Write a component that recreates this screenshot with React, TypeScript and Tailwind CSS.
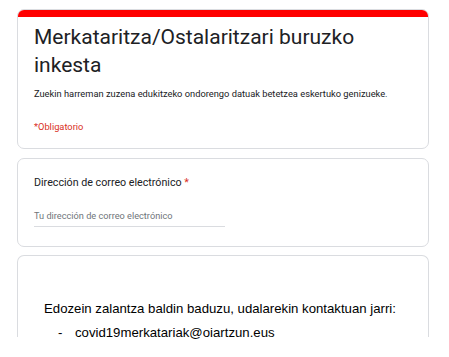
export default function App() {
  return (
    <div className="h-[357px] w-[449px] overflow-hidden bg-white font-['Roboto',sans-serif]">
      <div className="flex flex-col gap-[9px] pl-[17px] pr-[20px] pt-[9px]">
        {/* Header card */}
        <div className="overflow-hidden rounded-[7px] border border-[#dadce0] bg-white">
          <div className="h-[7px] bg-[#ff0000]" />
          <div className="px-[16px] pb-[14px] pt-[6px]">
            <h1 className="text-[21px] leading-[28px] text-[#202124]">
              Merkataritza/Ostalaritzari buruzko inkesta
            </h1>
            <p className="mt-[8px] text-[9.3px] leading-[14px] text-[#202124]">
              Zuekin harreman zuzena edukitzeko ondorengo datuak betetzea eskertuko genizueke.
            </p>
            <p className="mt-[19px] text-[9.3px] leading-[14px] text-[#d93025]">*Obligatorio</p>
          </div>
        </div>

        {/* Email card */}
        <div className="rounded-[7px] border border-[#dadce0] bg-white px-[16px] pb-[19px] pt-[16px]">
          <div className="text-[10.7px] leading-[16px] text-[#202124]">
            Dirección de correo electrónico <span className="text-[#d93025]">*</span>
          </div>
          <div className="mt-[18px] w-[191px] border-b border-[#dadce0] pb-[3px] text-[9.2px] leading-[14px] text-[#70757a]">
            Tu dirección de correo electrónico
          </div>
        </div>

        {/* Contact card, cut off by the bottom of the screenshot */}
        <div className="-mt-[1px] h-[82px] whitespace-nowrap rounded-t-[7px] border border-b-0 border-[#dadce0] bg-white px-[26px] pt-[41px] font-['Liberation_Sans',Arial,sans-serif] text-[13.2px] leading-[24px] text-black">
          <p>Edozein zalantza baldin baduzu, udalarekin kontaktuan jarri:</p>
          <div className="flex">
            <span className="ml-[14px] w-[17px]">-</span>
            <span>covid19merkatariak@oiartzun.eus</span>
          </div>
        </div>
      </div>
    </div>
  );
}
